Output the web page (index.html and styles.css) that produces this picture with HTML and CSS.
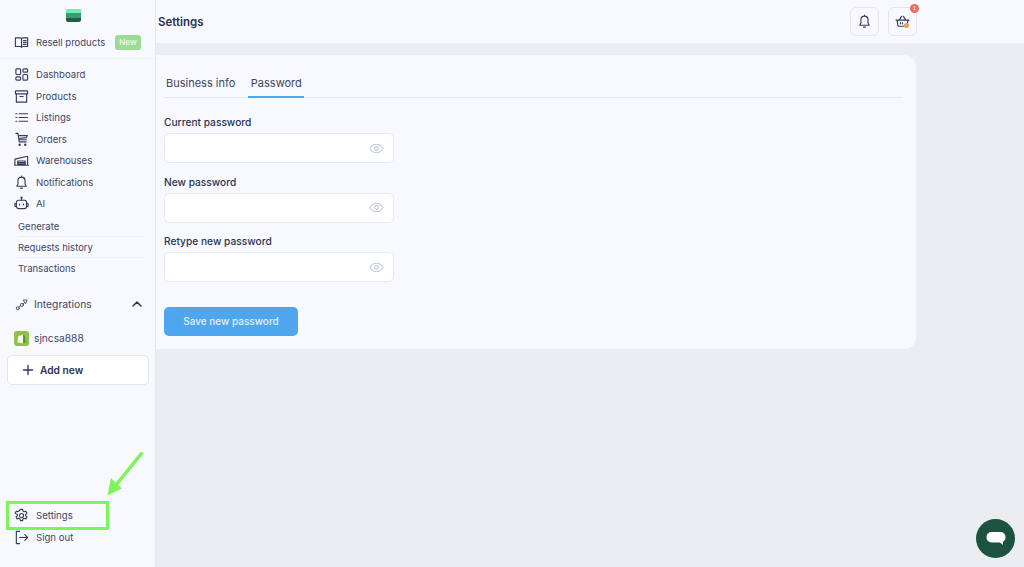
FILE: index.html
```html
<!DOCTYPE html>
<html lang="en">
<head>
<meta charset="utf-8">
<title>Settings</title>
<link rel="stylesheet" href="styles.css">
</head>
<body>
<div class="app">
  <aside class="sidebar">
    <div class="logo">
      <span class="logo-bar l1"></span><span class="logo-bar l2"></span><span class="logo-bar l3"></span>
    </div>
    <div class="resell">
      <svg class="ico" viewBox="0 0 16 16"><path d="M1.500 3h5.200c.8 0 1.300.4 1.300 1v9.200c0-.6-.5-1-1.300-1H1.500zM14.500 3H9.300C8.500 3 8 3.400 8 4v9.200c0-.6.500-1 1.300-1h5.200z"/><path d="M10 6h3M10 8h3M10 10h3"/></svg>
      <span class="resell-text">Resell products</span>
      <span class="badge">New</span>
    </div>
    <nav class="nav">
      <a class="nav-item"><svg class="ico" viewBox="0 0 16 16"><rect x="2" y="2" width="5" height="6" rx="1"/><rect x="9.500" y="2" width="5" height="3.500" rx="1"/><rect x="2" y="10.500" width="5" height="3.500" rx="1"/><rect x="9.500" y="8" width="5" height="6" rx="1"/></svg>Dashboard</a>
      <a class="nav-item"><svg class="ico" viewBox="0 0 16 16"><rect x="1.500" y="2" width="13" height="3.200" rx=".5"/><path d="M2.500 5.200V14h11V5.200M6.300 8h3.400"/></svg>Products</a>
      <a class="nav-item"><svg class="ico" viewBox="0 0 16 16"><path d="M5.500 4h9M5.500 8h9M5.500 12h9M2 4h1.200M2 8h1.200M2 12h1.200"/></svg>Listings</a>
      <a class="nav-item"><svg class="ico" viewBox="0 0 16 16"><path d="M2 1.500h2.200l1.400 9h7.500M4.500 3.800h9.800l-1 2.200-8.300 1M5.200 8.200h8"/><circle cx="6" cy="13.500" r=".7"/><circle cx="12" cy="13.500" r=".7"/></svg>Orders</a>
      <a class="nav-item"><svg class="ico" viewBox="0 0 16 16"><path d="M1 13V6.500L14.500 3.500V13M0.500 13h15M4 13V8.500h8V13M4 10.200h8M4 11.800h8"/></svg>Warehouses</a>
      <a class="nav-item"><svg class="ico" viewBox="0 0 16 16"><path d="M8 2.300c-2.400 0-3.800 1.800-3.800 4v3.200L3 12h10l-1.200-2.500V6.300c0-2.200-1.400-4-3.800-4zM8 1v1.300M7 14h2"/></svg>Notifications</a>
      <a class="nav-item"><svg class="ico" viewBox="0 0 16 16"><rect x="2.500" y="4.500" width="11" height="9" rx="2.500"/><path d="M8 4.500V2.500M2.500 8H1v3h1.500M13.500 8H15v3h-1.500M6 8.500v1M10 8.500v1"/><circle cx="8" cy="1.800" r=".6"/></svg>AI</a>
    </nav>
    <div class="subnav">
      <a class="sub-item">Generate</a>
      <a class="sub-item">Requests history</a>
      <a class="sub-item">Transactions</a>
    </div>
    <div class="integrations">
      <svg class="ico int-ico" viewBox="0 0 16 16"><circle cx="3.500" cy="12.500" r="1.900"/><circle cx="8.500" cy="8.500" r="1.900"/><path d="M5 11.200l1.900-1.600M10 7.200l2-1.600M10.500 2.500h4.500l-1.800 4z"/></svg>
      <span class="int-text">Integrations</span>
      <svg class="chev" viewBox="0 0 12 12"><path d="M2 8l4-4 4 4"/></svg>
    </div>
    <div class="store">
      <span class="shop"><svg viewBox="0 0 16 16" class="shop-bag"><path class="bag-a" d="M4 5l6-1.500V14L3 12.500z"/><path class="bag-b" d="M10 3.500l2 1L13 13l-3 1z"/></svg></span>
      <span>sjncsa888</span>
    </div>
    <button class="add-new" type="button"><svg class="plus" viewBox="0 0 12 12"><path d="M6 1.500v9M1.500 6h9"/></svg>Add new</button>
    <div class="bottom">
      <a class="nav-item"><svg class="ico" viewBox="0 0 16 16"><circle cx="8" cy="8" r="2.200"/><path d="M6.800 1.500h2.400l.4 1.800 1.200.7 1.800-.6 1.200 2.100-1.400 1.300v1.400l1.400 1.300-1.200 2.100-1.800-.6-1.200.7-.4 1.800H6.800l-.4-1.800-1.200-.7-1.800.6-1.200-2.100 1.400-1.300V6.800L1.200 5.500l1.200-2.100 1.800.6 1.200-.7z"/></svg>Settings</a>
      <a class="nav-item"><svg class="ico" viewBox="0 0 16 16"><path d="M6 1.500H2.500v13H6M6 8h8.500M11.500 5l3 3-3 3"/></svg>Sign out</a>
    </div>
  </aside>
  <div class="content">
    <header class="topbar">
      <h1 class="title">Settings</h1>
      <div class="actions">
        <button class="icon-btn" type="button"><svg class="ico big" viewBox="0 0 16 16"><path d="M8 2.300c-2.400 0-3.800 1.800-3.800 4v3.200L3 12h10l-1.200-2.500V6.300c0-2.200-1.400-4-3.800-4zM8 1v1.300M7 14h2"/></svg></button>
        <button class="icon-btn" type="button">
          <svg class="ico big" viewBox="0 0 16 16"><path d="M1 6.500h14M2.200 6.500l1 6.500h9.600l1-6.500M4.500 6.500L7 2.500M11.500 6.500L9 2.500M5.800 9v1.500M8 9v1.500"/></svg>
          <span class="dot-multi"></span>
          <span class="count">1</span>
        </button>
      </div>
    </header>
    <main class="main">
      <section class="card">
        <div class="tabs">
          <span class="tab">Business info</span>
          <span class="tab active">Password</span>
        </div>
        <form class="form">
          <div class="field">
            <label class="label">Current password</label>
            <div class="input"><svg class="eye" viewBox="0 0 16 16"><path d="M1 8c1.800-3 4.100-4.500 7-4.500S13.200 5 15 8c-1.800 3-4.100 4.500-7 4.500S2.800 11 1 8z"/><circle cx="8" cy="8" r="2"/></svg></div>
          </div>
          <div class="field">
            <label class="label">New password</label>
            <div class="input"><svg class="eye" viewBox="0 0 16 16"><path d="M1 8c1.800-3 4.100-4.500 7-4.500S13.200 5 15 8c-1.800 3-4.100 4.500-7 4.500S2.800 11 1 8z"/><circle cx="8" cy="8" r="2"/></svg></div>
          </div>
          <div class="field">
            <label class="label">Retype new password</label>
            <div class="input"><svg class="eye" viewBox="0 0 16 16"><path d="M1 8c1.800-3 4.100-4.500 7-4.500S13.200 5 15 8c-1.800 3-4.100 4.500-7 4.500S2.800 11 1 8z"/><circle cx="8" cy="8" r="2"/></svg></div>
          </div>
          <button class="save" type="button">Save new password</button>
        </form>
      </section>
    </main>
  </div>
  <div class="highlight"></div>
  <svg class="arrow" viewBox="0 0 42 50"><path d="M37.500 3.500L12 35"/><path class="head" d="M3.500 45.500L7 28L18 38.500z"/></svg>
  <button class="chat" type="button" aria-label="Chat"><svg viewBox="0 0 24 20"><rect x="2.500" y="3" width="19" height="10.500" rx="5"/><path d="M15.500 13h3.500v3z"/></svg></button>
</div>
</body>
</html>
```

FILE: styles.css
```css
* { box-sizing: border-box; }
html, body { margin: 0; height: 100%; }
body {
  font-family: Inter, "Noto Sans", sans-serif;
  color: #3d4663;
  background: #ebedf0;
  overflow: hidden;
}
.app { position: relative; display: flex; width: 1024px; height: 567px; }

.sidebar {
  width: 156px;
  flex: none;
  display: flex;
  flex-direction: column;
  background: #f8f9fe;
  border-right: 1px solid #e6e8ee;
  padding: 9px 0 19px;
}
.logo { display: flex; flex-direction: column; align-items: center; height: 13px; width: 15px; margin-left: 66px; }
.logo-bar { display: block; width: 15px; height: 4.500px; }
.l1 { background: #6ff0b4; border-radius: 1px 1px 0 0; }
.l2 { background: #3f9a70; }
.l3 { background: #1f5b45; border-radius: 0 0 2px 2px; }

.ico {
  width: 15px;
  height: 15px;
  flex: none;
  fill: none;
  stroke: #343c5a;
  stroke-width: 1.200;
  stroke-linecap: round;
  stroke-linejoin: round;
}
.resell {
  display: flex;
  align-items: center;
  height: 28px;
  margin-top: 6px;
  padding-left: 14px;
  font-size: 9.500px;
}
.resell .ico { margin-right: 7px; }
.resell-text { flex: 1; }
.badge {
  background: #9ddb96;
  color: #e8f6e5;
  font-size: 8px;
  font-weight: 600;
  border-radius: 3px;
  width: 26px;
  height: 15px;
  line-height: 15px;
  text-align: center;
  margin-right: 14px;
}
.nav {
  border-top: 1px solid #f0f1f6;
  margin-top: 2px;
  padding-top: 5px;
}
.nav-item {
  display: flex;
  align-items: center;
  gap: 7px;
  height: 21.500px;
  padding-left: 14px;
  font-size: 9.600px;
  color: #3d4663;
}
.subnav { margin-top: 1px; padding: 0 11px 0 18px; }
.sub-item {
  display: block;
  height: 21.300px;
  line-height: 21px;
  font-size: 9.500px;
  color: #3d4663;
  border-bottom: 1px solid #eff0f5;
}
.sub-item:last-child { border-bottom: 0; }
.integrations {
  display: flex;
  align-items: center;
  height: 20px;
  margin-top: 15px;
  padding: 0 12px 0 15px;
  font-size: 10.300px;
}
.int-ico { margin-right: 6px; width: 13px; height: 13px; stroke-width: 1; }
.int-text { flex: 1; }
.chev { width: 12px; height: 12px; fill: none; stroke: #2b3350; stroke-width: 1.500; stroke-linecap: round; stroke-linejoin: round; }
.store {
  display: flex;
  align-items: center;
  gap: 5px;
  height: 18px;
  margin-top: 15px;
  padding-left: 14px;
  font-size: 10.200px;
}
.shop {
  width: 15px;
  height: 15px;
  border-radius: 3px;
  background: #8fc04a;
  display: flex;
  align-items: center;
  justify-content: center;
}
.shop-bag { width: 13px; height: 13px; }
.bag-a { fill: #f3f8e8; }
.bag-b { fill: #5e8e34; }
.add-new {
  display: flex;
  align-items: center;
  gap: 6px;
  width: 142px;
  height: 30px;
  margin: 8px 0 0 7px;
  padding: 0 0 0 14px;
  background: #fff;
  border: 1px solid #e3e5ec;
  border-radius: 5px;
  font: 600 10.200px Inter, "Noto Sans", sans-serif;
  color: #2b3350;
}
.plus { width: 12px; height: 12px; fill: none; stroke: #2b3350; stroke-width: 1.300; stroke-linecap: round; }
.bottom { margin-top: auto; }

.content { flex: 1; display: flex; flex-direction: column; min-width: 0; }
.topbar {
  height: 43px;
  flex: none;
  display: flex;
  align-items: center;
  justify-content: space-between;
  background: #f8f9fe;
  padding: 0 107px 0 2px;
}
.title { margin: 0; font-size: 11.500px; font-weight: 600; color: #2b3350; }
.actions { display: flex; gap: 9px; margin-top: -1px; }
.icon-btn {
  position: relative;
  width: 29px;
  height: 29px;
  padding: 0;
  display: flex;
  align-items: center;
  justify-content: center;
  background: #f8f9fe;
  border: 1px solid #e4e6ee;
  border-radius: 6px;
}
.big { width: 15px; height: 15px; }
.dot-multi {
  position: absolute;
  right: 7px;
  bottom: 7px;
  width: 5px;
  height: 5px;
  border-radius: 50%;
  background: #e2a35c;
}
.count {
  position: absolute;
  top: -4px;
  right: -3px;
  width: 9px;
  height: 9px;
  border-radius: 50%;
  background: #ef6a62;
  color: #fff;
  font-size: 6px;
  line-height: 9px;
  text-align: center;
}

.main { flex: 1; padding-top: 12px; }
.card {
  width: 760px;
  height: 294px;
  background: #f8f9fe;
  border-radius: 0 12px 12px 0;
  padding: 18px 14px 0 8px;
}
.tabs {
  display: flex;
  gap: 4px;
  height: 25px;
  border-bottom: 1px solid #e5e8f0;
}
.tab {
  height: 25px;
  padding: 3px 2px 0;
  font-size: 11px;
  color: #3d4663;
}
.tab:first-child { padding-right: 9px; }
.tab.active { border-bottom: 2px solid #4da6ee; width: 56px; text-align: center; }
.form { display: flex; flex-direction: column; padding-top: 18px; }
.field { height: 59.600px; }
.label {
  display: block;
  height: 17px;
  font-size: 10.200px;
  font-weight: 500;
  color: #2b3350;
}
.input {
  display: flex;
  align-items: center;
  justify-content: flex-end;
  width: 230px;
  height: 30px;
  padding-right: 9px;
  background: #fff;
  border: 1px solid #e8eaf1;
  border-radius: 5px;
}
.eye { width: 15px; height: 15px; fill: none; stroke: #bcc9da; stroke-width: 1.100; }
.save {
  width: 134px;
  height: 29px;
  margin-top: 12px;
  background: #4da6ee;
  border: 0;
  border-radius: 5px;
  color: #e4f1fc;
  font: 500 10px Inter, "Noto Sans", sans-serif;
}

.highlight {
  position: absolute;
  left: 6px;
  top: 501px;
  width: 103px;
  height: 29px;
  border: 3px solid #7df45a;
}
.arrow {
  position: absolute;
  left: 104px;
  top: 450px;
  width: 42px;
  height: 50px;
  fill: none;
  stroke: #7df45a;
  stroke-width: 3.500;
  stroke-linecap: round;
}
.arrow .head { fill: #7df45a; stroke: none; }
.chat {
  position: absolute;
  left: 976px;
  top: 519px;
  width: 39px;
  height: 39px;
  padding: 0;
  border: 0;
  border-radius: 50%;
  background: #1e5240;
  display: flex;
  align-items: center;
  justify-content: center;
}
.chat svg { width: 24px; height: 20px; fill: #fff; }
```
